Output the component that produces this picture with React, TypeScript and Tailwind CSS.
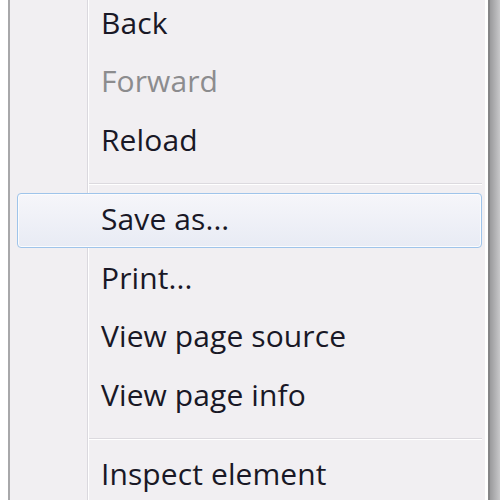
import React from 'react';

type Item = { label: string; disabled?: boolean; active?: boolean } | 'sep';

const items: Item[] = [
  { label: 'Back' },
  { label: 'Forward', disabled: true },
  { label: 'Reload' },
  'sep',
  { label: 'Save as...', active: true },
  { label: 'Print...' },
  { label: 'View page source' },
  { label: 'View page info' },
  'sep',
  { label: 'Inspect element' },
];

const Gutter = () => (
  <div className="w-[78px] shrink-0 self-stretch border-r border-[#dad8de] shadow-[1px_0_0_#ffffff]" />
);

export default function App() {
  return (
    <div
      className="w-[500px] h-[500px] overflow-hidden bg-white flex"
      style={{ fontFamily: '"Open Sans", "Noto Sans", sans-serif' }}
    >
      <div className="w-[8px] shrink-0 bg-white" />
      <div className="flex-1 flex border-l-2 border-[#a8a8aa] bg-[#f1eff2] border-r-[3px] border-r-white">
        <div className="flex-1 flex flex-col mt-[-7px]">
          {items.map((it, i) => {
            if (it === 'sep') {
              return (
                <div key={i} className="h-[21px] flex shrink-0">
                  <Gutter />
                  <div className="flex-1 pt-[14px] pl-[1px] pr-[3px]">
                    <div className="h-px bg-[#dcdadf]" />
                    <div className="h-px bg-white" />
                  </div>
                </div>
              );
            }
            return (
              <div key={i} className="relative h-[58.5px] flex shrink-0">
                {it.active && (
                  <div className="absolute left-[7px] right-[3px] top-[3px] bottom-0 rounded-[4px] border border-[#9fc4ea] bg-gradient-to-b from-[#f6f6fa] to-[#e8ebf4] shadow-[inset_0_0_0_1px_#fbfcfe]" />
                )}
                <Gutter />
                <div
                  className={`relative flex-1 flex items-center pl-[13px] text-[30px] font-medium tracking-[0.1px] ${
                    it.disabled ? 'text-[#8c8c8e]' : 'text-[#191826]'
                  }`}
                >
                  {it.label}
                </div>
              </div>
            );
          })}
        </div>
      </div>
      <div className="w-[2px] shrink-0 bg-[#858587]" />
      <div className="w-[10px] shrink-0 bg-gradient-to-r from-[#9a9a9c] to-[#c8c8ca]" />
    </div>
  );
}
